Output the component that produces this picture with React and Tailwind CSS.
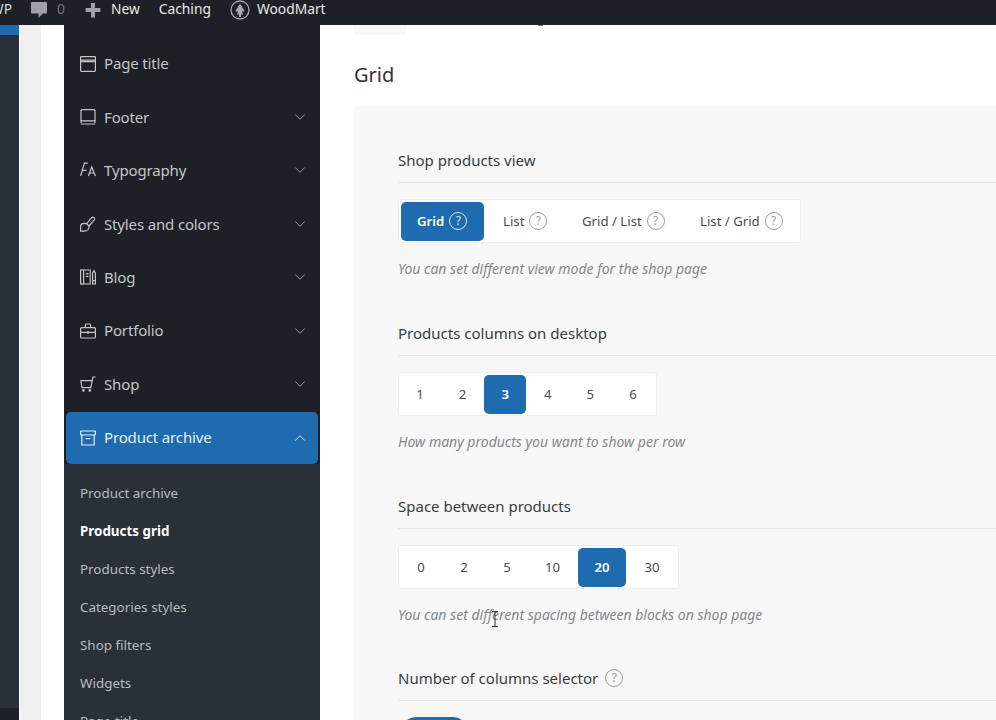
import { ChevronDown, ChevronUp } from 'lucide-react'

function Svg({ children, className = 'w-4 h-4' }) {
  return (
    <svg viewBox="0 0 16 16" fill="none" stroke="currentColor" strokeWidth="1.2" className={className + ' shrink-0'}>
      {children}
    </svg>
  )
}

const icons = {
  page: <Svg><rect x="0.6" y="0.6" width="14.8" height="14.8" rx="0.8" /><path d="M1 4.2h14M1 5.6h14" /></Svg>,
  footer: <Svg><path d="M1 14V1.6a1 1 0 0 1 1-1h12a1 1 0 0 1 1 1V14" /><path d="M0.8 11.8h14.4M0.8 15h14.4" /></Svg>,
  type: <Svg><path d="M0.6 14 4.4 1.2h3.4M2 8.4h4.4" /><path d="M8.4 14 11.8 5 15.4 14M9.6 11h4.6" /></Svg>,
  brush: <Svg><path d="M6.6 7.6 12 1.4c1-1.1 3.4.9 2.4 2.2L9 10" /><path d="M6.6 7.6 4 7.4C2 7.4.6 9 .6 11v4.2H4.4c2.6 0 4.6-2 4.6-4.4V10z" /></Svg>,
  blog: <Svg><rect x="0.6" y="1" width="3" height="14" /><path d="M3.6 1h6.6v14H3.6" /><path d="M5.8 4.6h2.6M5.8 7.4h2.6" /><path d="M12.6 4 14 1.6 15.4 4v11h-2.8zM12.6 11.6h2.8" /></Svg>,
  briefcase: <Svg><rect x="0.6" y="4.6" width="14.8" height="10.4" rx="1" /><path d="M5.4 4.4V2a1 1 0 0 1 1-1h3.2a1 1 0 0 1 1 1v2.4M0.6 9.4h14.8M8 8v3" /></Svg>,
  cart: <Svg><path d="M0.4 4.6h11.8l-1.4 7H2L0.8 5" /><path d="M12 5l1-4h2.6" /><circle cx="3.4" cy="14.4" r="0.7" /><circle cx="9.8" cy="14.4" r="0.7" /></Svg>,
  archive: <Svg><rect x="0.6" y="1" width="14.8" height="4" rx="0.8" /><path d="M1.8 5v10h12.4V5M5.6 8.6h4.8" /></Svg>,
}

const menu = [
  { label: 'Page title', icon: 'page' },
  { label: 'Footer', icon: 'footer', arrow: true },
  { label: 'Typography', icon: 'type', arrow: true },
  { label: 'Styles and colors', icon: 'brush', arrow: true },
  { label: 'Blog', icon: 'blog', arrow: true },
  { label: 'Portfolio', icon: 'briefcase', arrow: true },
  { label: 'Shop', icon: 'cart', arrow: true },
]

const subMenu = ['Product archive', 'Products grid', 'Products styles', 'Categories styles', 'Shop filters', 'Widgets', 'Page title']

function Help({ className = 'text-[#9a9da1]' }) {
  return (
    <span className={'w-[18px] h-[18px] shrink-0 rounded-full border border-current flex items-center justify-center text-[12px] leading-none font-normal ' + className}>?</span>
  )
}

function TopBar() {
  return (
    <div className="h-[25px] shrink-0 bg-[#1d2127] flex items-center pb-[6px] text-[13.8px] text-[#e8e8e8] overflow-hidden relative z-10">
      <span className="w-[12px] flex justify-end overflow-hidden text-[#d8d8d8]"><span>WP</span></span>
      <svg viewBox="0 0 16 16" className="w-[16px] h-[16px] ml-[19px] text-[#9ea3a8]" fill="currentColor">
        <path d="M1 0h14a1 1 0 0 1 1 1v9.4a1 1 0 0 1-1 1h-3.4L7.6 16v-4.6H1a1 1 0 0 1-1-1V1a1 1 0 0 1 1-1z" />
      </svg>
      <span className="ml-[10px] text-[#70757a]">0</span>
      <svg viewBox="0 0 16 16" className="w-[16px] h-[16px] ml-[20px] text-[#9ea3a8]" fill="currentColor">
        <path d="M6 1h4v5h5.4v4H10v5.4H6V10H.6V6H6z" />
      </svg>
      <span className="ml-[10px]">New</span>
      <span className="ml-[19px]">Caching</span>
      <svg viewBox="0 0 20 20" className="w-[20px] h-[20px] ml-[19px] text-[#a6aaae]">
        <circle cx="10" cy="10" r="9" fill="none" stroke="currentColor" strokeWidth="1.3" />
        <path d="M10 3.4 14.8 11.4H12l1 3.2H11V17H9v-2.4H7l1-3.2H5.2z" fill="currentColor" />
      </svg>
      <span className="ml-[7px]">WoodMart</span>
    </div>
  )
}

function Sidebar() {
  return (
    <aside className="w-[256px] shrink-0 bg-[#1d2027] flex flex-col pt-[12px] overflow-hidden">
      {menu.map((item) => (
        <div key={item.label} className="h-[53.4px] shrink-0 flex items-center pl-[16px] pr-[11px] text-[15px] tracking-[-0.15px] text-[#c4c6c8]">
          {icons[item.icon]}
          <span className="ml-[8px] flex-1">{item.label}</span>
          {item.arrow && <ChevronDown size={18} strokeWidth={1.2} className="text-[#a5a7aa]" />}
        </div>
      ))}
      <div className="h-[52px] shrink-0 mx-[2px] mt-[1px] rounded-[5px] bg-[#1f6bb0] flex items-center pl-[14px] pr-[9px] text-[15px] tracking-[-0.15px] text-[#e6eff7]">
        {icons.archive}
        <span className="ml-[8px] flex-1">Product archive</span>
        <ChevronUp size={18} strokeWidth={1.2} />
      </div>
      <div className="flex-1 bg-[#2a3038] pt-[10px] pl-[16px]">
        {subMenu.map((label) => (
          <div
            key={label}
            className={'h-[38px] flex items-center text-[13.4px] ' + (label === 'Products grid' ? 'font-bold text-white' : 'text-[#b9bcbf]')}
          >
            {label}
          </div>
        ))}
      </div>
    </aside>
  )
}

function Segmented({ className, children }) {
  return (
    <div className={'h-[44px] bg-white rounded-[3px] border border-[#eeeeee] flex items-center text-[13.2px] whitespace-nowrap text-[#4a4d50] ' + className}>
      {children}
    </div>
  )
}

function NumberButton({ value, active, className }) {
  return (
    <div
      className={
        'h-[39px] pt-[1px] flex items-center justify-center rounded-[5px] ' +
        className +
        (active ? ' bg-[#1f6bb0] text-white font-semibold' : '')
      }
    >
      {value}
    </div>
  )
}

function ViewButton({ label, width, active }) {
  return (
    <div className={'h-[39px] pl-[16px] flex items-center gap-[5px] rounded-[5px] ' + width + (active ? ' bg-[#1f6bb0] text-white font-semibold' : '')}>
      <span className="pt-[2px]">{label}</span>
      <Help className={active ? 'text-[#d3e3f1]' : 'text-[#9a9da1]'} />
    </div>
  )
}

function Section({ title, help, hint, children }) {
  return (
    <section>
      <div className="h-[43px] pb-[2px] flex items-center gap-[7px] border-b border-[#e6e6e7] text-[15px] text-[#3a3d40]">
        {title}
        {help && <Help />}
      </div>
      <div className="mt-[16px]">{children}</div>
      {hint && <p className="mt-[15px] h-[21px] text-[14px] leading-[21px] italic text-[#85888b]">{hint}</p>}
    </section>
  )
}

function Content() {
  return (
    <main className="flex-1 bg-white relative overflow-hidden">
      <div className="h-[10px] ml-[34px] flex items-start">
        <div className="h-[10px] w-[52px] bg-[#f7f7f8] rounded-b-[3px]" />
        <div className="ml-[132px] w-[5px] h-px bg-[#777]" />
      </div>
      <h2 className="mt-[26px] ml-[34px] h-[28px] text-[20px] leading-[28px] text-[#303336]">Grid</h2>
      <div className="mt-[17px] ml-[34px] h-[700px] bg-[#f7f7f8] rounded-tl-[6px] pl-[44px] pt-[34px]">
        <Section title="Shop products view" hint="You can set different view mode for the shop page">
          <Segmented className="w-[403px] pl-[2px] gap-[3px]">
            <ViewButton label="Grid" width="w-[83px]" active />
            <ViewButton label="List" width="w-[76px]" />
            <ViewButton label="Grid / List" width="w-[115px]" />
            <ViewButton label="List / Grid" width="w-[115px]" />
          </Segmented>
        </Section>
        <div className="mt-[34px]">
          <Section title="Products columns on desktop" hint="How many products you want to show per row">
            <Segmented className="w-[259px] gap-[0.6px]">
              {[1, 2, 3, 4, 5, 6].map((n) => (
                <NumberButton key={n} value={n} active={n === 3} className="w-[42px]" />
              ))}
            </Segmented>
          </Section>
        </div>
        <div className="mt-[34px]">
          <Section title="Space between products" hint="You can set different spacing between blocks on shop page">
            <Segmented className="w-[281px] pl-[2px] gap-[3px]">
              {[0, 2, 5].map((n) => (
                <NumberButton key={n} value={n} className="w-[40px]" />
              ))}
              <NumberButton value={10} className="w-[45px]" />
              <NumberButton value={20} active className="w-[48px]" />
              <NumberButton value={30} className="w-[46px]" />
            </Segmented>
          </Section>
        </div>
        <div className="mt-[33px]">
          <Section title="Number of columns selector" help>
            <div className="w-[67px] h-[30px] ml-[3px] rounded-full bg-[#1f6bb0]" />
          </Section>
        </div>
      </div>
      <svg viewBox="0 0 8 16" className="absolute left-[171px] top-[586px] w-[8px] h-[16px] text-[#333]" fill="none" stroke="currentColor" strokeWidth="1">
        <path d="M1 .5h6M4 .5v15M1 15.5h6" />
      </svg>
    </main>
  )
}

export default function App() {
  return (
    <div className="w-[996px] h-[720px] overflow-hidden flex flex-col bg-white font-['Noto_Sans',sans-serif]">
      <TopBar />
      <div className="flex-1 flex min-h-0">
        <div className="w-[19px] shrink-0 bg-[#2a3038] flex flex-col">
          <div className="h-[10px] bg-[#1f6bb0]" />
          <div className="flex-1" />
          <div className="h-[12px] bg-[#1d2127]" />
        </div>
        <div className="w-px shrink-0 bg-white" />
        <div className="w-[21px] shrink-0 bg-[#f0f0f1]" />
        <div className="w-[23px] shrink-0 bg-white" />
        <Sidebar />
        <Content />
      </div>
    </div>
  )
}
